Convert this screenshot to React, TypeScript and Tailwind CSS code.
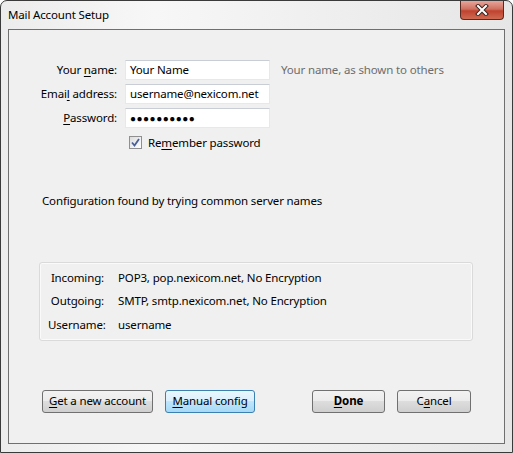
import React from "react";

const U = ({ children }: { children: React.ReactNode }) => <span className="underline underline-offset-2">{children}</span>;

function Btn({ children, blue, bold, w }: { children: React.ReactNode; blue?: boolean; bold?: boolean; w: string }) {
  return (
    <div
      className={`${w} h-[23px] rounded-[3px] border flex items-center justify-center text-black ${bold ? "font-bold" : ""} ${
        blue
          ? "border-[#3c7fb1] bg-[linear-gradient(#eaf6fd_0%,#d9f0fc_50%,#bee6fd_50%,#a7d9f5_100%)]"
          : "border-[#707070] bg-[linear-gradient(#f2f2f2_0%,#ebebeb_50%,#dddddd_50%,#cfcfcf_100%)]"
      }`}
    >
      {children}
    </div>
  );
}

function Field({ value, dots }: { value: string; dots?: boolean }) {
  return (
    <div className="w-[145px] h-[20px] bg-white border border-[#e3e9ef] border-t-[#c9ced6] flex items-center pl-[4px] text-black">
      {dots ? <span className="tracking-[0.5px] text-[10px]">{value}</span> : value}
    </div>
  );
}

export default function App() {
  return (
    <div
      className="w-[513px] h-[453px] flex flex-col rounded-t-[7px] border border-[#3a3a3a] bg-[linear-gradient(90deg,#ececec_0%,#f7f7f7_30%,#e6e6e6_100%)] text-[11.5px] tracking-[-0.15px] text-black"
      style={{ fontFamily: '"Noto Sans", "Open Sans", sans-serif' }}
    >
      <div className="h-[28px] flex items-start shrink-0">
        <div className="pl-[7px] pt-[5px] text-black">Mail Account Setup</div>
        <div className="ml-auto mr-[8px] w-[44px] h-[19px] rounded-b-[4px] border border-t-0 border-[#5a2a20] bg-[linear-gradient(#e8a59a_0%,#d0705f_45%,#c0432f_55%,#cf6a52_100%)] flex items-center justify-center">
          <svg width="14" height="12" viewBox="0 0 14 12">
            <path d="M3 2 L11 10 M11 2 L3 10" stroke="#3a2420" strokeWidth="4" strokeLinecap="square" />
            <path d="M3 2 L11 10 M11 2 L3 10" stroke="#ffffff" strokeWidth="2" strokeLinecap="square" />
          </svg>
        </div>
      </div>
      <div className="mx-[7px] mb-[8px] flex-1 border border-[#6f6f6f] bg-[#f0f0f0] flex flex-col">
        <div className="pt-[30px] grid grid-cols-[108px_145px_auto] gap-x-[8px] gap-y-[4px] items-center">
          <div className="text-right">Your <U>n</U>ame:</div>
          <Field value="Your Name" />
          <div className="pl-[3px] text-[#6d6d6d]">Your name, as shown to others</div>
          <div className="text-right">Emai<U>l</U> address:</div>
          <Field value="username@nexicom.net" />
          <div />
          <div className="text-right"><U>P</U>assword:</div>
          <Field value="●●●●●●●●●●" dots />
          <div />
          <div />
          <div className="flex items-center gap-[6px] pl-[4px] pt-[2px]">
            <div className="w-[13px] h-[13px] border border-[#8f8f8f] bg-[linear-gradient(135deg,#dcdcdc,#ffffff)] flex items-center justify-center">
              <svg width="9" height="9" viewBox="0 0 9 9">
                <path d="M1 4.5 L3.5 7.5 L8 1" stroke="#4a5f97" strokeWidth="1.8" fill="none" />
              </svg>
            </div>
            <span>Re<U>m</U>ember password</span>
          </div>
          <div />
        </div>
        <div className="pl-[33px] pt-[41px]">Configuration found by trying common server names</div>
        <div className="ml-[30px] mr-[31px] mt-[52px] h-[79px] rounded-[3px] border border-[#dadada] shadow-[inset_0_0_0_1px_#fafafa] flex flex-col justify-center gap-[6px] pl-[8px]">
          <div className="flex"><span className="w-[70px] text-right pr-[14px]">Incoming:</span><span>POP3, pop.nexicom.net, No Encryption</span></div>
          <div className="flex"><span className="w-[70px] text-right pr-[14px]">Outgoing:</span><span>SMTP, smtp.nexicom.net, No Encryption</span></div>
          <div className="flex"><span className="w-[70px] text-right pr-[14px]">Username:</span><span>username</span></div>
        </div>
        <div className="flex items-center pl-[33px] pr-[33px] mt-[49px]">
          <Btn w="w-[111px]"><U>G</U>et a new account</Btn>
          <div className="w-[12px]" />
          <Btn w="w-[90px]" blue><U>M</U>anual config</Btn>
          <div className="flex-1" />
          <Btn w="w-[73px]" bold><U>D</U>one</Btn>
          <div className="w-[12px]" />
          <Btn w="w-[74px]">C<U>a</U>ncel</Btn>
        </div>
      </div>
    </div>
  );
}
